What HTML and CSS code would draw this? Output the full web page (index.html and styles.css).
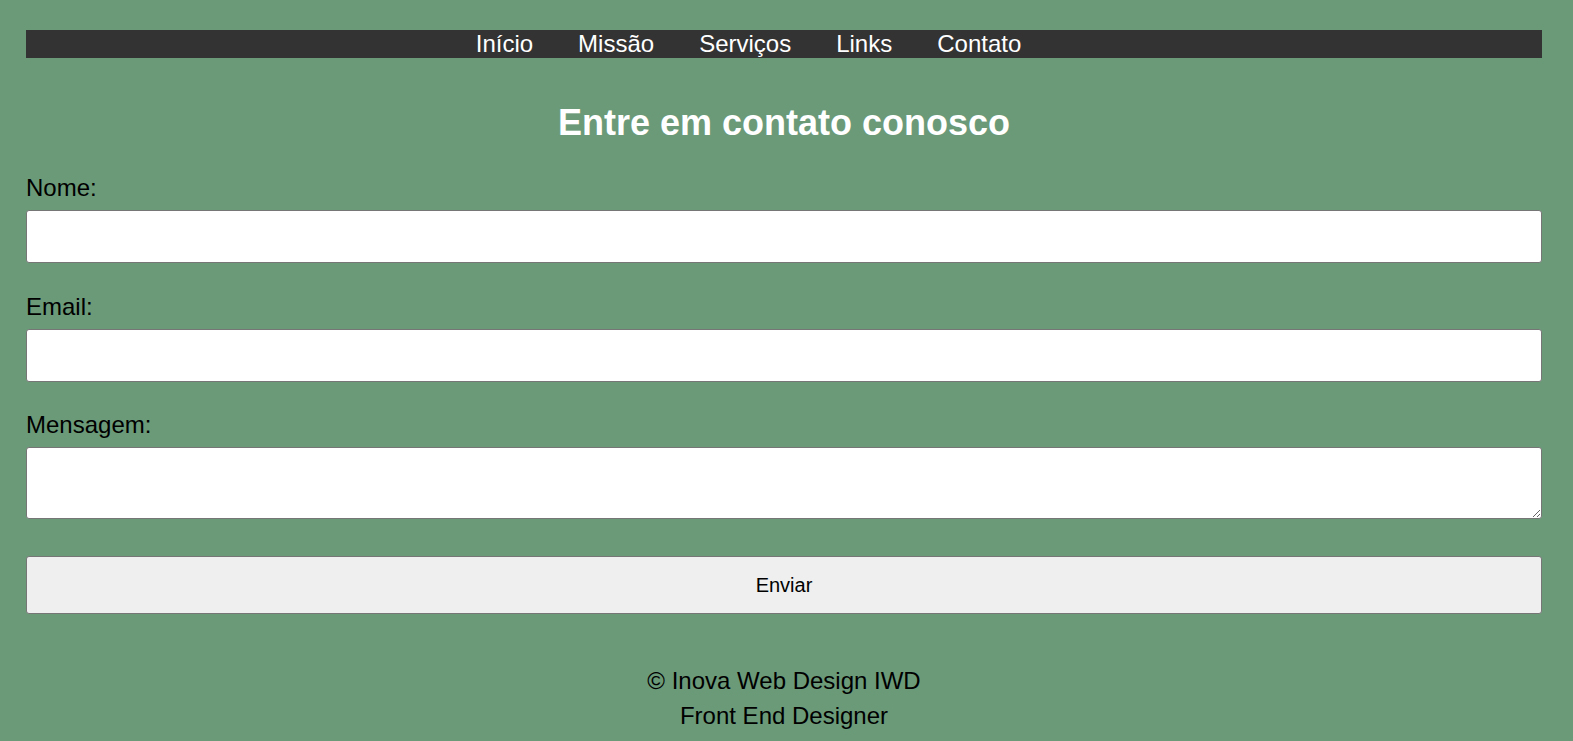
FILE: index.html
```html
<!DOCTYPE html>
<html lang="pt-BR">
<head>
<meta charset="utf-8">
<title>Contato</title>
<link rel="stylesheet" href="styles.css">
</head>
<body>
<div class="page">
  <nav class="nav">
    <a class="nav-link" href="#">Início</a>
    <a class="nav-link" href="#">Missão</a>
    <a class="nav-link" href="#">Serviços</a>
    <a class="nav-link" href="#">Links</a>
    <a class="nav-link" href="#">Contato</a>
  </nav>
  <h2 class="title">Entre em contato conosco</h2>
  <form class="form">
    <label class="label" for="nome">Nome:</label>
    <input class="field" type="text" id="nome">
    <label class="label" for="email">Email:</label>
    <input class="field field-last" type="email" id="email">
    <label class="label" for="msg">Mensagem:</label>
    <textarea class="area" id="msg"></textarea>
    <button class="btn" type="button">Enviar</button>
  </form>
  <footer class="footer">
    <div class="footer-line">© Inova Web Design IWD</div>
    <div class="footer-line">Front End Designer</div>
  </footer>
</div>
</body>
</html>
```

FILE: styles.css
```css
html, body {
  margin: 0;
  padding: 0;
  background: #6b9a79;
}
body {
  font-family: "Liberation Sans", Arial, sans-serif;
  font-size: 24px;
  color: #000;
}
.page {
  padding: 30px 31px 0 26px;
}
.nav {
  background: #333333;
  height: 28px;
  display: flex;
  justify-content: center;
  align-items: center;
  gap: 45px;
  padding-right: 71px;
}
.nav-link {
  color: #fff;
  text-decoration: none;
  font-size: 24px;
  line-height: 28px;
}
.title {
  margin: 44px 0 31px;
  text-align: center;
  color: #fff;
  font-size: 36px;
  font-weight: bold;
  line-height: 41px;
}
.form {
  display: flex;
  flex-direction: column;
}
.label {
  display: block;
  line-height: 28px;
  margin-bottom: 8px;
}
.field {
  display: block;
  box-sizing: border-box;
  width: 100%;
  height: 53px;
  margin: 0 0 30px;
  border: 1px solid #767676;
  border-radius: 3px;
  background: #fff;
  font-family: inherit;
  font-size: 20px;
  padding: 0 4px;
}
.field-last {
  margin-bottom: 29px;
}
.area {
  display: block;
  box-sizing: border-box;
  width: 100%;
  height: 72px;
  margin: 0;
  border: 1px solid #767676;
  border-radius: 3px;
  background: #fff;
  font-family: inherit;
  font-size: 20px;
  resize: vertical;
}
.btn {
  display: block;
  box-sizing: border-box;
  width: 100%;
  height: 58px;
  margin-top: 37px;
  border: 1px solid #767676;
  border-radius: 3px;
  background: #efefef;
  color: #000;
  font-family: inherit;
  font-size: 20px;
}
.footer {
  margin-top: 49px;
  text-align: center;
}
.footer-line {
  line-height: 35px;
}
```
